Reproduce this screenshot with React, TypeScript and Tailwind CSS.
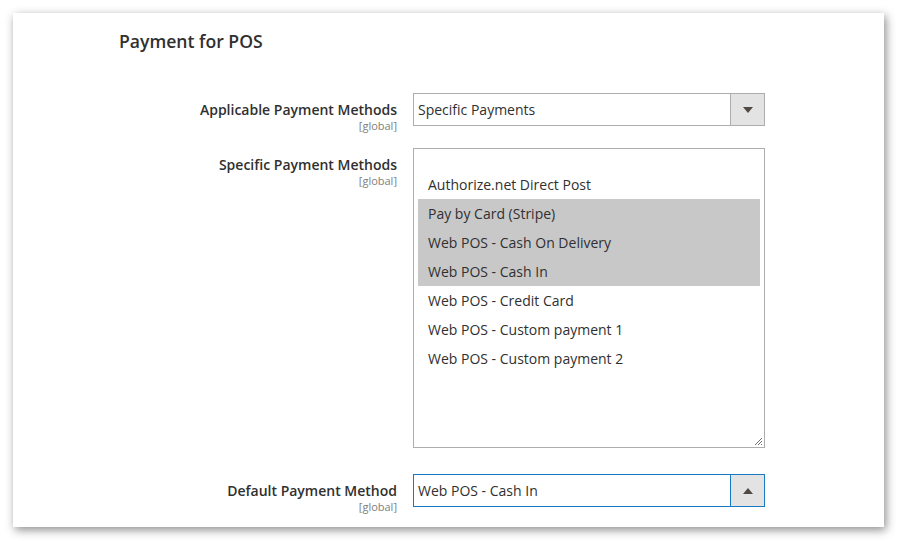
import React from "react";

const options = [
  { label: "Authorize.net Direct Post", selected: false },
  { label: "Pay by Card (Stripe)", selected: true },
  { label: "Web POS - Cash On Delivery", selected: true },
  { label: "Web POS - Cash In", selected: true },
  { label: "Web POS - Credit Card", selected: false },
  { label: "Web POS - Custom payment 1", selected: false },
  { label: "Web POS - Custom payment 2", selected: false },
];

function FieldLabel({ text }: { text: string }) {
  return (
    <div className="flex w-[384px] shrink-0 flex-col items-end pt-[7px] text-right">
      <span className="text-[14px] font-semibold leading-[19px] text-[#303030]">{text}</span>
      <span className="text-[11px] leading-[13px] text-[#808080]">[global]</span>
    </div>
  );
}

function Arrow({ up = false }: { up?: boolean }) {
  return (
    <svg width="10" height="6" viewBox="0 0 10 6" aria-hidden>
      {up ? <path d="M0 6 L5 0 L10 6 Z" fill="#514943" /> : <path d="M0 0 L10 0 L5 6 Z" fill="#514943" />}
    </svg>
  );
}

function Select({ value, focused = false }: { value: string; focused?: boolean }) {
  const border = focused ? "border-[#1979c3]" : "border-[#adadad]";
  return (
    <div className={`flex h-[33px] w-[352px] border ${border} bg-white`}>
      <div className="flex flex-1 items-center pl-[4px] text-[14px] text-[#303030]">{value}</div>
      <div className={`flex w-[34px] items-center justify-center border-l ${border} bg-[#e3e3e3]`}>
        <Arrow up={focused} />
      </div>
    </div>
  );
}

function MultiSelect() {
  return (
    <div className="relative h-[300px] w-[352px] border border-[#adadad] bg-white px-[4px] pt-[21px]">
      {options.map((o) => (
        <div
          key={o.label}
          className={`flex h-[29px] items-center pl-[10px] text-[14px] text-[#303030] ${o.selected ? "bg-[#c8c8c8]" : ""}`}
        >
          {o.label}
        </div>
      ))}
      <svg className="absolute bottom-[1px] right-[1px]" width="9" height="9" viewBox="0 0 9 9" aria-hidden>
        <path d="M1 8 L8 1 M4 8 L8 4 M7 8 L8 7" stroke="#707070" strokeWidth="1" />
      </svg>
    </div>
  );
}

export default function App() {
  return (
    <div className="h-[541px] w-[898px] bg-white pl-[13px] pt-[13px] font-['Open_Sans',sans-serif]">
      <div className="h-[514px] w-[871px] bg-white pt-[16px] shadow-[2px_3px_9px_rgba(0,0,0,0.45)]">
        <h2 className="pl-[106px] text-[17.6px] font-semibold leading-[24px] text-[#303030]">Payment for POS</h2>

        <div className="mt-[40px] flex">
          <FieldLabel text="Applicable Payment Methods" />
          <div className="ml-[16px]">
            <Select value="Specific Payments" />
          </div>
        </div>

        <div className="mt-[16px] flex">
          <FieldLabel text="Specific Payment Methods" />
          <div className="ml-[16px]">
            <MultiSelect />
          </div>
        </div>

        <div className="mt-[26px] flex">
          <FieldLabel text="Default Payment Method" />
          <div className="ml-[16px]">
            <Select value="Web POS - Cash In" focused />
          </div>
        </div>
      </div>
    </div>
  );
}
